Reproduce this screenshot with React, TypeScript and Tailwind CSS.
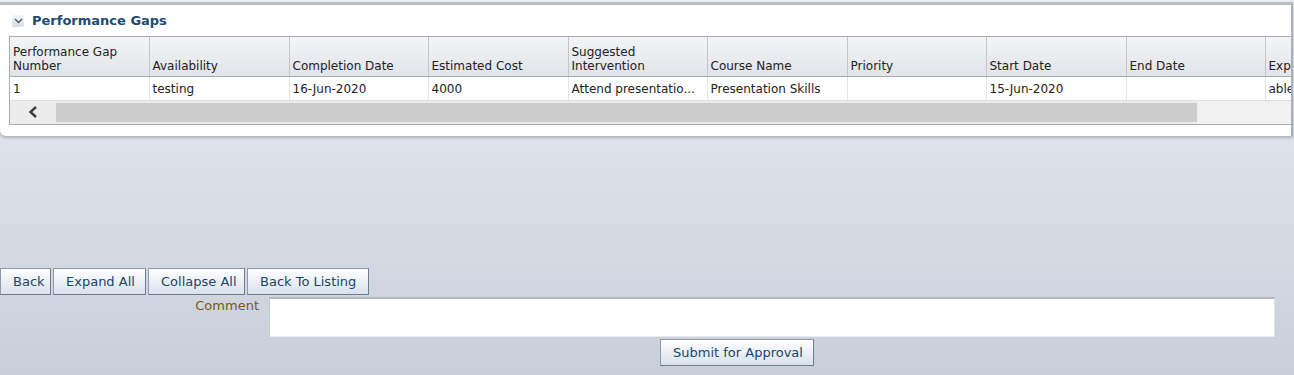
import React from "react";

const columns = [
  { label: ["Performance Gap", "Number"], w: 139 },
  { label: ["Availability"], w: 140 },
  { label: ["Completion Date"], w: 139 },
  { label: ["Estimated Cost"], w: 140 },
  { label: ["Suggested", "Intervention"], w: 139 },
  { label: ["Course Name"], w: 140 },
  { label: ["Priority"], w: 139 },
  { label: ["Start Date"], w: 140 },
  { label: ["End Date"], w: 139 },
  { label: ["Expected Outcome"], w: 140 },
];

const row = ["1", "testing", "16-Jun-2020", "4000", "Attend presentatio...", "Presentation Skills", "", "15-Jun-2020", "", "able to present"];

function ActionButton({ label, className = "" }: { label: string; className?: string }) {
  return (
    <button
      className={`h-[27px] px-[12px] border border-[#8e9aab] border-b-[#6f7c8e] border-r-[#6f7c8e] bg-gradient-to-b from-[#ffffff] to-[#d9e1ec] text-[13px] text-[#1c4468] leading-none whitespace-nowrap ${className}`}
    >
      {label}
    </button>
  );
}

export default function App() {
  return (
    <div
      className="w-[1294px] h-[375px] overflow-hidden bg-gradient-to-b from-[#e9ecf1] via-[#dadee6] to-[#c8cfda] text-[#222]"
      style={{ fontFamily: "Tahoma, 'DejaVu Sans', Verdana, sans-serif" }}
    >
      {/* Performance Gaps panel */}
      <div className="mt-[2px] w-[1293px] h-[134px] bg-white border-t-[3px] border-t-[#b9bdc4] border-r-2 border-r-[#aab0b8] rounded-bl-[6px] shadow-[0_2px_3px_rgba(80,90,110,0.35)] overflow-hidden">
        <div className="flex items-center h-[31px] pl-[12px] gap-[8px]">
          <div className="w-[12px] h-[12px] rounded-[2px] bg-gradient-to-b from-[#f4f6f9] to-[#d7dce4] flex items-center justify-center">
            <svg width="9" height="6" viewBox="0 0 9 6">
              <path d="M1 1 L4.5 4.5 L8 1" fill="none" stroke="#4a5a6e" strokeWidth="1.4" />
            </svg>
          </div>
          <span className="text-[13px] font-bold text-[#1c4b74] leading-none">Performance Gaps</span>
        </div>

        <div className="ml-[9px] border border-[#a7acb3] border-r-0 w-[1400px]">
          <table className="table-fixed border-collapse text-[12px] leading-[14px]">
            <colgroup>
              {columns.map((c, i) => (
                <col key={i} style={{ width: c.w }} />
              ))}
            </colgroup>
            <thead>
              <tr className="h-[39px] bg-gradient-to-b from-[#f3f4f6] to-[#e1e4e9]">
                {columns.map((c, i) => (
                  <th
                    key={i}
                    className="align-bottom text-left font-normal px-[3px] pb-[3px] border-r border-[#c2c6cc] border-b border-b-[#a7acb3] whitespace-nowrap overflow-hidden"
                  >
                    {c.label.map((l, j) => (
                      <div key={j}>{l}</div>
                    ))}
                  </th>
                ))}
              </tr>
            </thead>
            <tbody>
              <tr className="h-[24px]">
                {row.map((v, i) => (
                  <td
                    key={i}
                    className="px-[3px] pt-[1px] border-r border-[#e3e5e8] border-b border-b-[#dcdfe3] whitespace-nowrap overflow-hidden"
                  >
                    {v}
                  </td>
                ))}
              </tr>
            </tbody>
          </table>
          {/* horizontal scrollbar */}
          <div className="flex h-[23px] bg-[#ececec]">
            <div className="w-[46px] flex items-center justify-center">
              <svg width="12" height="14" viewBox="0 0 12 14">
                <path d="M9 2 L3.5 7 L9 12" fill="none" stroke="#3c3c3c" strokeWidth="2.4" />
              </svg>
            </div>
            <div className="w-[1141px] my-[2px] bg-[#cdcdcd]" />
            <div className="flex-1 bg-[#f1f1f1]" />
          </div>
        </div>
      </div>

      {/* footer buttons */}
      <div className="mt-[132px] flex gap-[2px]">
        <ActionButton label="Back" className="w-[51px] px-0" />
        <ActionButton label="Expand All" className="w-[93px]" />
        <ActionButton label="Collapse All" className="w-[97px]" />
        <ActionButton label="Back To Listing" className="w-[122px]" />
      </div>

      <div className="flex mt-[2px]">
        <div className="w-[259px] text-right text-[13px] text-[#7b5a10] leading-none pt-[2px]">Comment</div>
        <div className="ml-[10px] w-[1006px] h-[40px] bg-white border-t-2 border-t-[#b3b8c2] border-l border-l-[#c4c9d1] border-r border-r-[#dde1e7] border-b border-b-[#e6e9ee]" />
      </div>

      <div className="mt-[2px] pl-[660px]">
        <ActionButton label="Submit for Approval" className="w-[154px]" />
      </div>
    </div>
  );
}
